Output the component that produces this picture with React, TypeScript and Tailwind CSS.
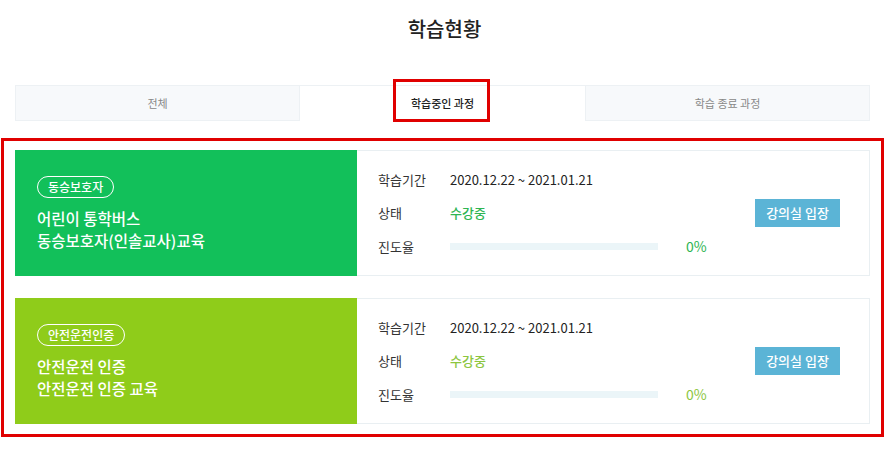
import React from "react";

type Course = {
  tag: string;
  lines: string[];
  panel: string;
  accent: string;
  period: string;
};

const courses: Course[] = [
  {
    tag: "동승보호자",
    lines: ["어린이 통학버스", "동승보호자(인솔교사)교육"],
    panel: "bg-[#12c05a]",
    accent: "text-[#2fb552]",
    period: "2020.12.22 ~ 2021.01.21",
  },
  {
    tag: "안전운전인증",
    lines: ["안전운전 인증", "안전운전 인증 교육"],
    panel: "bg-[#8fcc1a]",
    accent: "text-[#8cc63f]",
    period: "2020.12.22 ~ 2021.01.21",
  },
];

const CourseCard = ({ c }: { c: Course }) => {
  return (
    <div className="flex h-[126px]">
      {/* 왼쪽 컬러 패널 */}
      <div className={`${c.panel} flex w-[342px] flex-col justify-center pl-[22px] text-white`}>
        <span className="mb-[9px] self-start rounded-full border border-white px-[10px] text-[12px] font-medium leading-[20px]">
          {c.tag}
        </span>
        {c.lines.map((l) => (
          <div key={l} className="text-[15.5px] font-medium leading-[22px]">
            {l}
          </div>
        ))}
      </div>

      {/* 오른쪽 정보 */}
      <div className="flex flex-1 items-center border border-l-0 border-[#e9eff2] bg-white pl-[21px] pr-[29px]">
        <div className="flex flex-1 flex-col text-[13px] text-[#333]">
          <div className="flex h-[33px] items-center">
            <span className="w-[72px]">학습기간</span>
            <span className="text-[#222]">{c.period}</span>
          </div>
          <div className="flex h-[34px] items-center">
            <span className="w-[72px]">상태</span>
            <span className={`${c.accent} font-medium`}>수강중</span>
          </div>
          <div className="flex h-[33px] items-center">
            <span className="w-[72px]">진도율</span>
            <div className="h-[7px] w-[208px] bg-[#ebf5f8]" />
            <span className={`${c.accent} ml-[28px] text-[14px]`}>0%</span>
          </div>
        </div>
        <button className="h-[28px] w-[85px] bg-[#5bb4d6] text-[13px] font-medium text-white">
          강의실 입장
        </button>
      </div>
    </div>
  );
};

const App = () => {
  return (
    <div
      className="w-[889px] bg-white pt-[14px]"
      style={{ fontFamily: '"Noto Sans CJK KR", "Noto Sans", sans-serif' }}
    >
      {/* 제목 */}
      <h1 className="text-center text-[20px] font-medium leading-[30px] text-[#222]">학습현황</h1>

      {/* 탭 */}
      <div className="mx-[15px] mt-[41px] flex h-[36px] text-[11px]">
        <div className="flex w-[285px] items-center justify-center border border-[#edf1f4] bg-[#f7f9fb] text-[#888]">
          전체
        </div>
        <div className="relative flex w-[285px] items-center justify-center border-t border-[#edf1f4] bg-white font-medium text-[#222]">
          학습중인 과정
          <span className="absolute left-[93px] top-[-7px] h-[43px] w-[97px] border-[3px] border-[#e00000]" />
        </div>
        <div className="flex w-[285px] items-center justify-center border border-[#edf1f4] bg-[#f7f9fb] text-[#888]">
          학습 종료 과정
        </div>
      </div>

      {/* 과정 목록 */}
      <div className="ml-[1px] mt-[17px] flex w-[883px] flex-col gap-[22px] border-[3px] border-[#e00000] px-[11px] pb-[10px] pt-[9px]">
        {courses.map((c) => (
          <CourseCard key={c.tag} c={c} />
        ))}
      </div>
    </div>
  );
};

export default App;
